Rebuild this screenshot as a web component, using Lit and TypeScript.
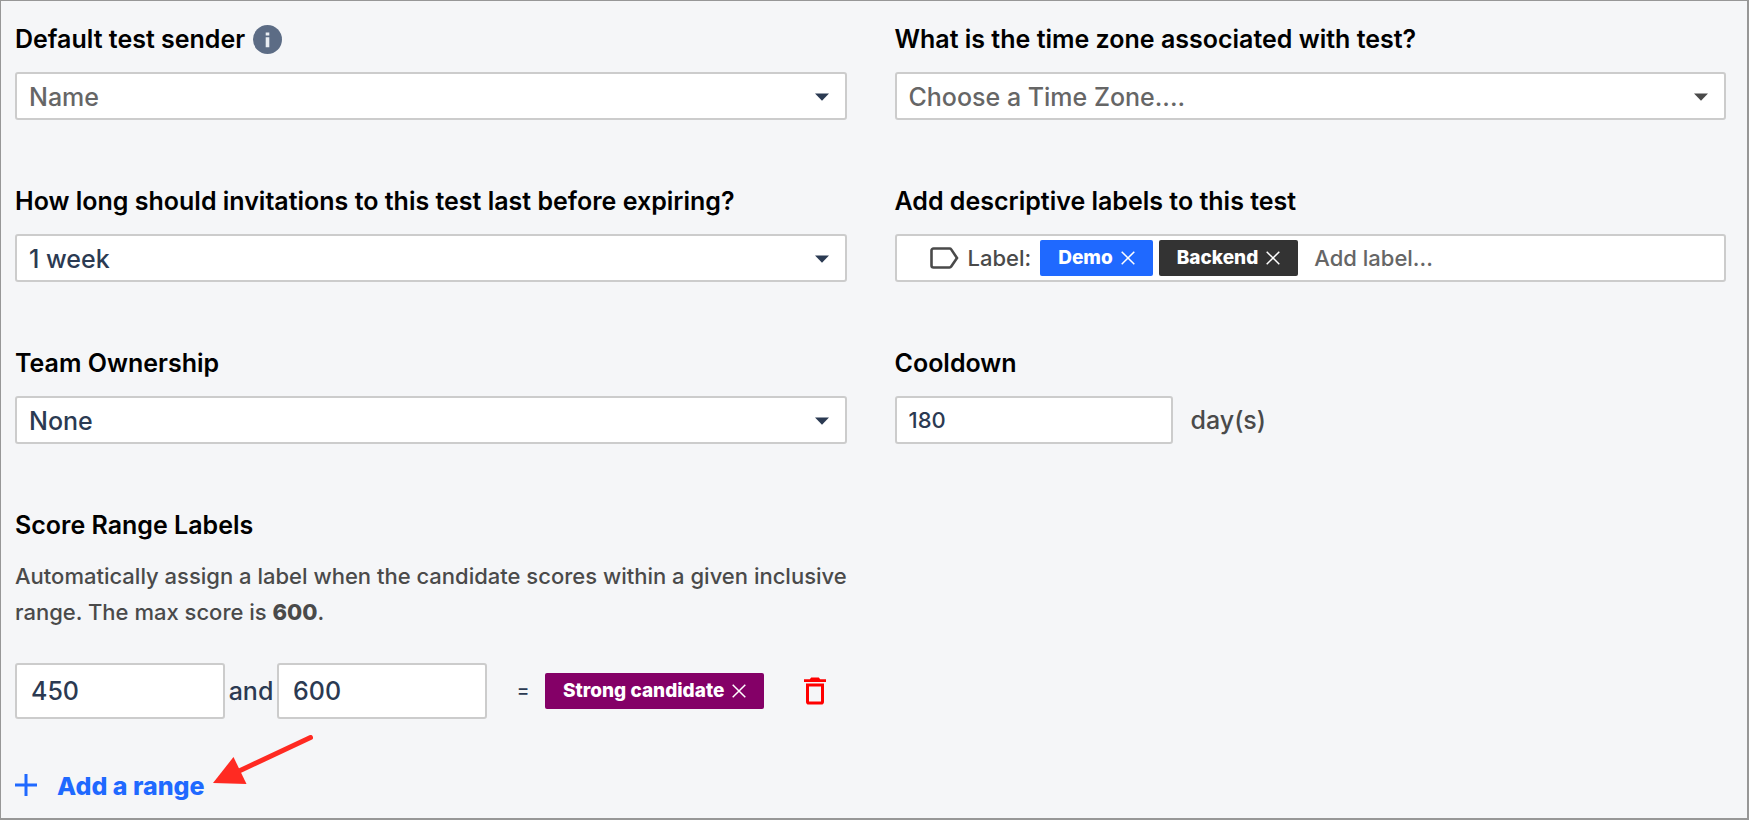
import { LitElement, html, css, svg } from "lit";
import { customElement, property, state } from "lit/decorators.js";

const crossIcon = html`<svg class="cross" viewBox="0 0 14 14" width="14" height="14" aria-hidden="true">
  ${svg`<path d="M0.7 0.7 L13.3 13.3 M13.3 0.7 L0.7 13.3" fill="none" stroke="currentColor" stroke-width="1.5"/>`}
</svg>`;

@customElement("tag-chip")
class TagChip extends LitElement {
  @property() name = "";
  @property({ reflect: true }) tone = "blue";

  static styles = css`
    :host {
      display: flex;
      align-items: center;
      gap: 8px;
      height: 36px;
      padding: 0 18px;
      box-sizing: border-box;
      border-radius: 2px;
      color: #fff;
      background: #1f69ff;
      font: 800 19px/36px Inter, sans-serif;
      white-space: nowrap;
    }
    :host([tone="dark"]) { background: #333; }
    :host([tone="purple"]) { background: #840067; }
    .remove {
      display: flex;
      padding: 0;
      border: 0;
      background: none;
      color: inherit;
      cursor: pointer;
    }
  `;

  render() {
    return html`<span>${this.name}</span>
      <button class="remove" aria-label="Remove ${this.name}">${crossIcon}</button>`;
  }
}

@customElement("app-root")
class AppRoot extends LitElement {
  @state() private ranges = [{ from: 450, to: 600, label: "Strong candidate" }];

  static styles = css`
    :host {
      display: block;
      min-height: 100vh;
      box-sizing: border-box;
      border: solid #979797;
      border-width: 1px 2px 2px 1px;
      padding: 23px 21px 16px 14px;
      background: #f5f6f8;
      color: #2b3a52;
      font: 500 25px/30px Inter, sans-serif;
    }
    .fields {
      display: grid;
      grid-template-columns: 1fr 1fr;
      gap: 66px 48px;
    }
    .field {
      display: flex;
      flex-direction: column;
      gap: 18px;
      min-width: 0;
    }
    .caption, .heading {
      display: flex;
      align-items: center;
      gap: 8px;
      height: 30px;
      margin: 0;
      color: #000;
      font: 600 25px/30px Inter, sans-serif;
      white-space: nowrap;
    }
    .info {
      display: flex;
      padding: 0;
      border: 0;
      background: none;
    }
    .control {
      box-sizing: border-box;
      width: 100%;
      height: 48px;
      border: 2px solid #ccc;
      border-radius: 3px;
      background: #fff;
      color: #2b3a52;
      font: 500 25px/30px Inter, sans-serif;
      padding: 0 12px;
      margin: 0;
    }
    .select { display: grid; align-items: center; }
    .select > * { grid-area: 1 / 1; }
    .select select { appearance: none; padding-top: 2px; }
    .select .empty { color: #666; }
    .select svg {
      justify-self: end;
      margin: 2px 18px 0 0;
      color: #2b3a52;
      pointer-events: none;
    }
    .select .muted { color: #4a4a4a; }
    .labels {
      display: flex;
      align-items: center;
      padding-left: 33px;
      gap: 6px;
      color: #4a4a4a;
      font-size: 22px;
    }
    .labels .prefix { display: flex; align-items: center; gap: 9px; padding-right: 3px; }
    .labels input {
      flex: 1;
      min-width: 0;
      border: 0;
      padding: 0 10px;
      background: none;
      color: #2b3a52;
      font: inherit;
    }
    .labels input::placeholder { color: #666; opacity: 1; }
    .days { display: flex; align-items: center; gap: 18px; color: #4a4a4a; }
    .days .control { width: 278px; font-size: 22px; }
    .scores { margin-top: 66px; }
    .description {
      max-width: 864px;
      margin: 18px 0 33px;
      color: #4a4a4a;
      font: 500 22px/36px Inter, sans-serif;
    }
    .description strong { font-weight: 800; }
    .range { display: flex; align-items: center; }
    .range .control { width: 210px; height: 56px; padding: 0 14px; }
    .range .and { width: 52px; text-align: center; }
    .range .equals { box-sizing: border-box; width: 58px; padding-left: 14px; text-align: center; font-size: 19px; }
    .range .delete, .add {
      border: 0;
      padding: 0;
      background: none;
      cursor: pointer;
    }
    .range .delete { display: flex; margin-left: 40px; color: #f00; }
    .actions { display: flex; align-items: flex-start; margin-top: 16px; gap: 8px; }
    .add {
      display: flex;
      align-items: center;
      gap: 20px;
      margin-top: 34px;
      color: #1f69ff;
      font: 800 25px/30px Inter, sans-serif;
    }
    .add span { padding-top: 2px; }
    .arrow { display: block; }
    svg { flex: none; }
  `;

  private select(id: string, label: string, value: string, empty = false, info = false) {
    return html`<div class="field">
      <div class="caption">
        <label for=${id}>${label}</label>
        ${info
          ? html`<button class="info" aria-label="About ${label}">
              <svg width="29" height="29" viewBox="0 0 29 29">
                <circle cx="14.5" cy="14.5" r="14.5" fill="#5c6c85" />
                <path d="M12.7 7.5h3.6v3h-3.6z M12.7 12.3h3.6v10h-3.6z" fill="#e9edf2" />
              </svg>
            </button>`
          : ""}
      </div>
      <div class="select">
        <select id=${id} class="control ${empty ? "empty" : ""}"><option>${value}</option></select>
        <svg class=${id === "zone" ? "muted" : ""} width="14" height="8" viewBox="0 0 14 8">
          <path d="M0 0.5h14L7 7.8z" fill="currentColor" />
        </svg>
      </div>
    </div>`;
  }

  render() {
    return html`
      <div class="fields">
        ${this.select("sender", "Default test sender", "Name", true, true)}
        ${this.select("zone", "What is the time zone associated with test?", "Choose a Time Zone....", true)}
        ${this.select("expiry", "How long should invitations to this test last before expiring?", "1 week")}
        <div class="field">
          <label class="caption" for="labels">Add descriptive labels to this test</label>
          <div class="control labels">
            <span class="prefix">
              <svg width="29" height="22" viewBox="0 0 29 22">
                <path d="M3.5 1.5H19.5a2 2 0 0 1 1.7 0.9L27 11l-5.8 8.6a2 2 0 0 1-1.7 0.9H3.5a2 2 0 0 1-2-2v-15a2 2 0 0 1 2-2z"
                  fill="none" stroke="#4a4a4a" stroke-width="2.6" />
              </svg>
              Label:
            </span>
            <tag-chip name="Demo"></tag-chip>
            <tag-chip name="Backend" tone="dark"></tag-chip>
            <input id="labels" placeholder="Add label..." />
          </div>
        </div>
        ${this.select("team", "Team Ownership", "None")}
        <div class="field">
          <label class="caption" for="cooldown">Cooldown</label>
          <div class="days"><input id="cooldown" class="control" value="180" /><span>day(s)</span></div>
        </div>
      </div>
      <section class="scores">
        <h2 class="heading">Score Range Labels</h2>
        <p class="description">
          Automatically assign a label when the candidate scores within a given inclusive range. The max score is
          <strong>600</strong>.
        </p>
        ${this.ranges.map(
          (r) => html`<div class="range">
            <input class="control" aria-label="Minimum score" .value=${String(r.from)} />
            <span class="and">and</span>
            <input class="control" aria-label="Maximum score" .value=${String(r.to)} />
            <span class="equals">=</span>
            <tag-chip name=${r.label} tone="purple"></tag-chip>
            <button class="delete" aria-label="Delete range">
              <svg width="22" height="28" viewBox="0 0 22 28">
                <path d="M0 2.2h5.8L7.2 0.4h7.6l1.4 1.8H22v2.9H0z" fill="currentColor" />
                <path d="M3.5 8.1h15v16.6a1.3 1.3 0 0 1-1.3 1.3H4.8a1.3 1.3 0 0 1-1.3-1.3z" fill="none" stroke="currentColor" stroke-width="3" />
              </svg>
            </button>
          </div>`
        )}
        <div class="actions">
          <button class="add">
            <svg width="22" height="22" viewBox="0 0 22 22">
              <path d="M11 0v22M0 11h22" stroke="currentColor" stroke-width="3" />
            </svg>
            <span>Add a range</span>
          </button>
          <svg class="arrow" width="100" height="49" viewBox="0 0 100 49" aria-hidden="true">
            <path d="M97.5 2.5L24 37" stroke="#ff2a22" stroke-width="5" stroke-linecap="round" />
            <path d="M0 48L20.5 22L33.5 49z" fill="#ff2a22" />
          </svg>
        </div>
      </section>
    `;
  }
}
